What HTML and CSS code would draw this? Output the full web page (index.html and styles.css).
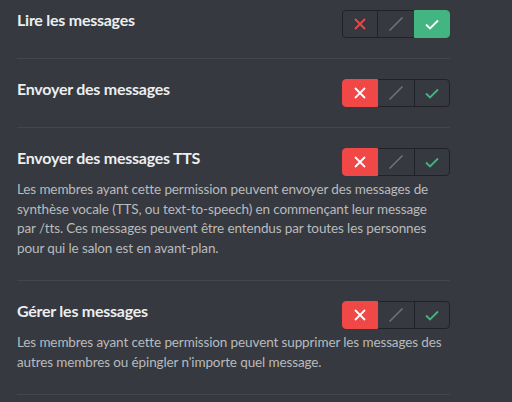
FILE: index.html
```html
<!DOCTYPE html>
<html lang="fr">
<head>
<meta charset="utf-8">
<link rel="stylesheet" href="styles.css">
</head>
<body>
<div class="list">
  <div class="perm">
    <div class="head">
      <div class="title">Lire les messages</div>
      <div class="toggle">
        <div class="seg seg-deny"><svg width="12" height="12" viewBox="0 0 12 12"><path d="M1 1L11 11M11 1L1 11" stroke="currentColor" stroke-width="1.8" fill="none"/></svg></div>
        <div class="seg seg-mid"><svg width="16" height="16" viewBox="0 0 16 16"><path d="M1.5 14.5L14.5 1.5" stroke="currentColor" stroke-width="1.4" fill="none"/></svg></div>
        <div class="seg seg-allow on"><svg width="14" height="11" viewBox="0 0 14 11"><path d="M1 5.5L5 9.5L13 1.5" stroke="currentColor" stroke-width="1.8" fill="none"/></svg></div>
      </div>
    </div>
  </div>
  <div class="perm">
    <div class="head">
      <div class="title">Envoyer des messages</div>
      <div class="toggle">
        <div class="seg seg-deny on"><svg width="12" height="12" viewBox="0 0 12 12"><path d="M1 1L11 11M11 1L1 11" stroke="currentColor" stroke-width="1.8" fill="none"/></svg></div>
        <div class="seg seg-mid"><svg width="16" height="16" viewBox="0 0 16 16"><path d="M1.5 14.5L14.5 1.5" stroke="currentColor" stroke-width="1.4" fill="none"/></svg></div>
        <div class="seg seg-allow"><svg width="14" height="11" viewBox="0 0 14 11"><path d="M1 5.5L5 9.5L13 1.5" stroke="currentColor" stroke-width="1.8" fill="none"/></svg></div>
      </div>
    </div>
  </div>
  <div class="perm">
    <div class="head">
      <div class="title">Envoyer des messages TTS</div>
      <div class="toggle">
        <div class="seg seg-deny on"><svg width="12" height="12" viewBox="0 0 12 12"><path d="M1 1L11 11M11 1L1 11" stroke="currentColor" stroke-width="1.8" fill="none"/></svg></div>
        <div class="seg seg-mid"><svg width="16" height="16" viewBox="0 0 16 16"><path d="M1.5 14.5L14.5 1.5" stroke="currentColor" stroke-width="1.4" fill="none"/></svg></div>
        <div class="seg seg-allow"><svg width="14" height="11" viewBox="0 0 14 11"><path d="M1 5.5L5 9.5L13 1.5" stroke="currentColor" stroke-width="1.8" fill="none"/></svg></div>
      </div>
    </div>
    <div class="desc">Les membres ayant cette permission peuvent envoyer des messages de synthèse vocale (TTS, ou text-to-speech) en commençant leur message par&nbsp;/tts. Ces messages peuvent être entendus par toutes les personnes pour qui le salon est en avant-plan.</div>
  </div>
  <div class="perm">
    <div class="head">
      <div class="title">Gérer les messages</div>
      <div class="toggle">
        <div class="seg seg-deny on"><svg width="12" height="12" viewBox="0 0 12 12"><path d="M1 1L11 11M11 1L1 11" stroke="currentColor" stroke-width="1.8" fill="none"/></svg></div>
        <div class="seg seg-mid"><svg width="16" height="16" viewBox="0 0 16 16"><path d="M1.5 14.5L14.5 1.5" stroke="currentColor" stroke-width="1.4" fill="none"/></svg></div>
        <div class="seg seg-allow"><svg width="14" height="11" viewBox="0 0 14 11"><path d="M1 5.5L5 9.5L13 1.5" stroke="currentColor" stroke-width="1.8" fill="none"/></svg></div>
      </div>
    </div>
    <div class="desc">Les membres ayant cette permission peuvent supprimer les messages des autres membres ou épingler n'importe quel message.</div>
  </div>
</div>
</body>
</html>
```
FILE: styles.css
```css
html, body {
  margin: 0;
  padding: 0;
  background: #36393f;
  height: 100%;
  overflow: hidden;
}
body {
  font-family: Lato, "Noto Sans", sans-serif;
}
.list {
  margin-top: -10px;
  padding: 0 62px 0 17px;
}
.perm {
  padding: 20px 0 20px;
  border-bottom: 1px solid #42464d;
}
.head {
  display: flex;
  align-items: flex-start;
  justify-content: space-between;
}
.title {
  color: #eceef0;
  font-size: 16px;
  font-weight: 700;
  line-height: 20px;
  letter-spacing: -0.25px;
}
.toggle {
  display: flex;
  height: 28px;
}
.seg {
  box-sizing: border-box;
  height: 28px;
  width: 38px;
  margin-left: -1px;
  border: 1px solid #202225;
  display: flex;
  align-items: center;
  justify-content: center;
  position: relative;
}
.seg:first-child {
  width: 36px;
  margin-left: 0;
  border-radius: 4px 0 0 4px;
}
.seg:last-child {
  width: 36px;
  border-radius: 0 4px 4px 0;
}
.seg-deny { color: #f04747; }
.seg-mid { color: #72767d; }
.seg-allow { color: #43b581; }
.seg-deny.on {
  background: #f04747;
  border-color: #f04747;
  color: #fff;
  z-index: 1;
}
.seg-allow.on {
  background: #43b581;
  border-color: #43b581;
  color: #fff;
  z-index: 1;
}
.desc {
  margin-top: 4px;
  margin-bottom: 2px;
  color: #b9bbbe;
  font-size: 13.5px;
  line-height: 19.5px;
  letter-spacing: -0.12px;
}
```
